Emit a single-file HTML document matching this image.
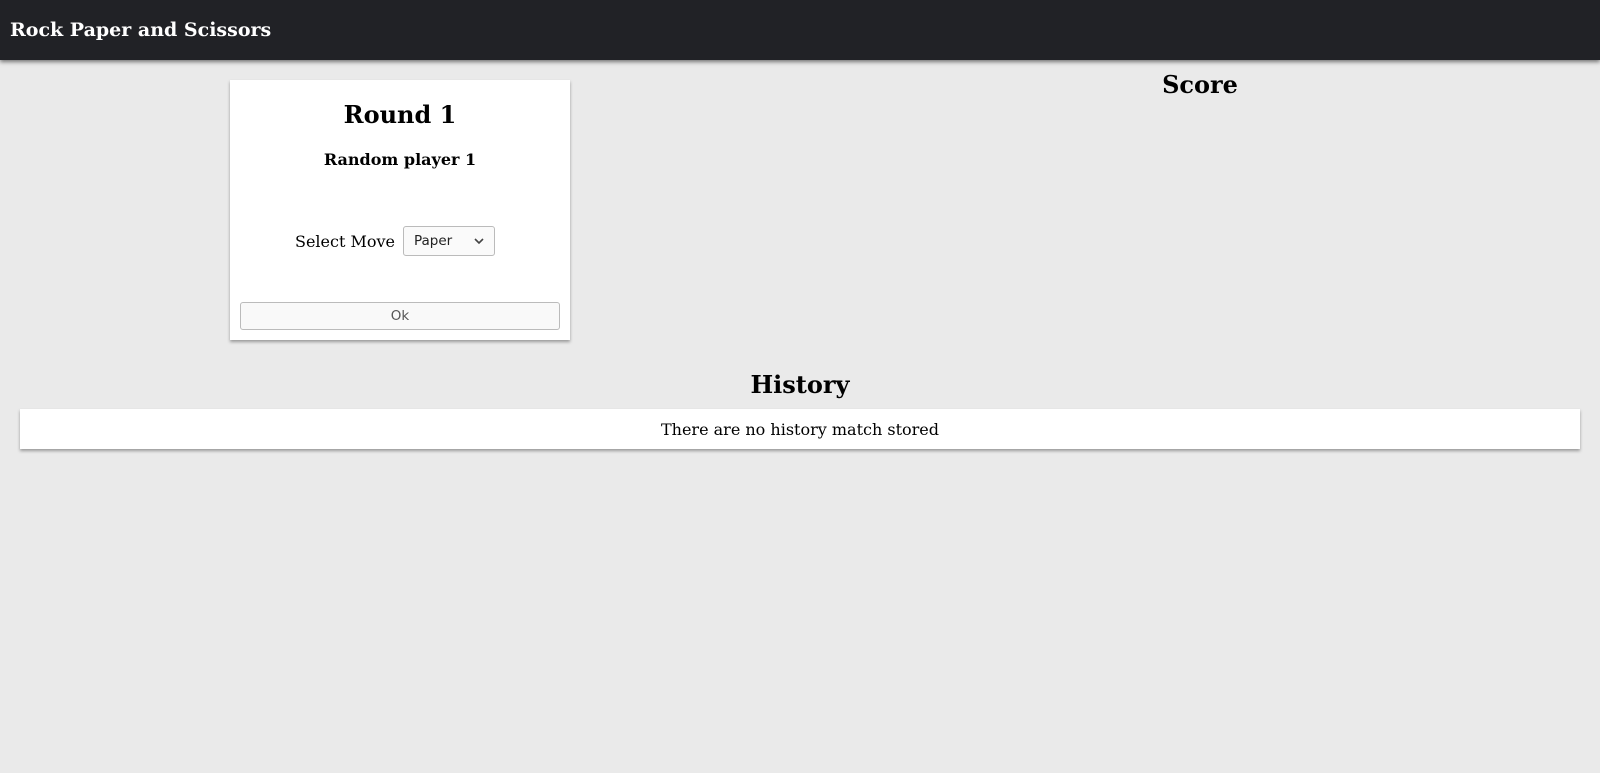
<!DOCTYPE html>
<html><head><style>
*{box-sizing:border-box}
body{margin:0;width:1600px;height:773px;background:#eaeaea;font-family:"DejaVu Serif",serif;color:#000;position:relative;overflow:hidden}
.hdr{position:absolute;left:0;top:0;width:1600px;height:60px;background:#212226;box-shadow:0 2px 4px rgba(0,0,0,.5);color:#fff;font-weight:bold;font-size:19px;line-height:61px;padding-left:10px}
.card{position:absolute;left:230px;top:80px;width:340px;height:260px;background:#fff;box-shadow:0 2px 3px rgba(0,0,0,.35);text-align:center}
h2{margin:0;font-size:24px;font-weight:bold;position:absolute;left:0;right:0}
.sel{position:absolute;left:173px;top:146px;width:92px;height:30px;border:1px solid #bbb;border-radius:3px;background:#fafafa;font-family:"DejaVu Sans",sans-serif;font-size:13.5px;line-height:29px;text-align:left;padding-left:10px;color:#222}
.ok{position:absolute;left:10px;top:222px;width:320px;height:28px;border:1px solid #bbb;border-radius:3px;background:#f9f9f9;font-family:"DejaVu Sans",sans-serif;font-size:13.5px;line-height:27px;color:#555}
.hist{position:absolute;left:20px;top:409px;width:1560px;height:40px;background:#fff;box-shadow:0 2px 3px rgba(0,0,0,.35);text-align:center;font-size:16px;line-height:41px}
</style></head><body>
<div class="hdr">Rock Paper and Scissors</div>
<div class="card">
<h2 style="top:17px;line-height:36px">Round 1</h2>
<div style="position:absolute;left:0;right:0;top:66px;font-size:16px;font-weight:bold;line-height:28px">Random player 1</div>
<div style="position:absolute;left:65px;top:147px;font-size:16px;line-height:30px">Select Move</div>
<div class="sel">Paper<svg style="position:absolute;right:10px;top:10px" width="10" height="8" viewBox="0 0 10 8"><path d="M1 2l4 4 4-4" fill="none" stroke="#444" stroke-width="1.6"/></svg></div>
<div class="ok">Ok</div>
</div>
<h2 style="left:1000px;width:400px;text-align:center;top:68px;line-height:34px">Score</h2>
<h2 style="left:0;width:1600px;text-align:center;top:368px;line-height:34px">History</h2>
<div class="hist">There are no history match stored</div>
</body></html>
